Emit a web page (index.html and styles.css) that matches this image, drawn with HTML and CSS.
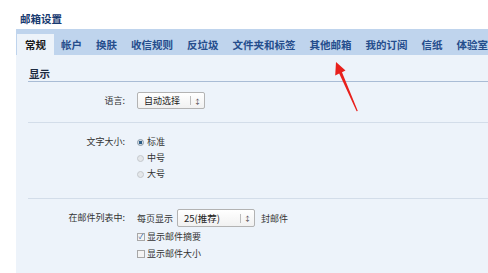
FILE: index.html
```html
<!DOCTYPE html>
<html lang="zh">
<head>
<meta charset="utf-8">
<link rel="stylesheet" href="styles.css">
</head>
<body>
<div class="page">
  <div class="title">邮箱设置</div>
  <div class="tabs">
    <div class="tab active">常规</div>
    <div class="tab">帐户</div>
    <div class="tab">换肤</div>
    <div class="tab">收信规则</div>
    <div class="tab">反垃圾</div>
    <div class="tab">文件夹和标签</div>
    <div class="tab">其他邮箱</div>
    <div class="tab">我的订阅</div>
    <div class="tab">信纸</div>
    <div class="tab">体验室</div>
  </div>
  <div class="panel">
    <div class="heading">显示</div>
    <div class="row row-lang">
      <div class="label">语言:</div>
      <div class="content">
        <div class="select sel-lang"><span class="sel-text">自动选择</span><span class="sel-bar"></span><span class="sel-arrow">&#8597;</span></div>
      </div>
    </div>
    <div class="row row-size">
      <div class="label">文字大小:</div>
      <div class="content">
        <div class="opt"><span class="radio checked"></span>标准</div>
        <div class="opt"><span class="radio"></span>中号</div>
        <div class="opt"><span class="radio"></span>大号</div>
      </div>
    </div>
    <div class="row row-list">
      <div class="label label-list">在邮件列表中:</div>
      <div class="content">
        <div class="perpage">每页显示 <div class="select sel-num"><span class="sel-text">25(推荐)</span><span class="sel-bar"></span><span class="sel-arrow">&#8597;</span></div> 封邮件</div>
        <div class="opt"><span class="check checked">&#10003;</span>显示邮件摘要</div>
        <div class="opt"><span class="check"></span>显示邮件大小</div>
      </div>
    </div>
  </div>
  <svg class="arrow" width="32" height="58" viewBox="330 58 32 58">
    <polygon points="336,62 345.5,70.5 342,72.3 357.8,111 356.6,111.3 339.2,73.6 335.2,75.5" fill="#e8201c"/>
  </svg>
</div>
</body>
</html>
```

FILE: styles.css
```css
html, body {
  margin: 0;
  padding: 0;
  background: #ffffff;
  font-family: "Noto Sans CJK SC", "Noto Sans", sans-serif;
  color: #333333;
}

.page {
  position: relative;
  padding-left: 16px;
  height: 273px;
  overflow: hidden;
}

.title {
  height: 29px;
  box-sizing: border-box;
  padding: 13px 0 0 4px;
  font-size: 10.5px;
  line-height: 12px;
  font-weight: bold;
  color: #173a70;
}

.tabs {
  display: flex;
  align-items: flex-end;
  height: 26px;
  padding-left: 1px;
  background: #bfd4ed;
  white-space: nowrap;
}

.tab {
  height: 21px;
  line-height: 21px;
  padding: 0 7px 0 7px;
  font-size: 10.5px;
  font-weight: bold;
  color: #254d8c;
  flex: none;
}

.tab.active {
  background: #edf3fa;
  color: #1a1a1a;
  padding: 0 8px;
}

.panel {
  background: #edf3fa;
  padding-left: 12px;
  height: 218px;
}

.heading {
  height: 27px;
  box-sizing: border-box;
  padding: 13px 0 0 1px;
  font-size: 10.5px;
  line-height: 12px;
  font-weight: bold;
  color: #1c2a40;
  border-bottom: 1px solid #a9bcd5;
}

.row {
  display: grid;
  grid-template-columns: 97px 1fr;
  column-gap: 12px;
  font-size: 9px;
  border-bottom: 1px solid #d3dde9;
}

.row:last-child {
  border-bottom: none;
}

.label {
  text-align: right;
  color: #333;
}

.row-lang {
  padding: 10px 0 13px;
}

.row-lang .label {
  line-height: 17px;
}

.row-size {
  padding: 11px 0 16px;
}

.row-size .label,
.opt {
  line-height: 16px;
}

.row-list {
  padding: 10px 0 0;
}

.label-list {
  line-height: 18px;
}

.opt {
  display: flex;
  align-items: center;
  color: #333;
}

.select {
  display: inline-flex;
  align-items: center;
  box-sizing: border-box;
  height: 17px;
  border: 1px solid #b3b3b3;
  border-radius: 2px;
  background: linear-gradient(#ffffff, #f1f1f1);
  vertical-align: middle;
  color: #222;
}

.sel-lang {
  width: 68px;
}

.sel-num {
  width: 78px;
  height: 18px;
  margin: 0 2px;
  font-size: 9.5px;
}

.sel-text {
  flex: 1;
  padding-left: 6px;
}

.sel-bar {
  width: 1px;
  height: 9px;
  background: #bcbcbc;
}

.sel-arrow {
  width: 13px;
  text-align: center;
  font-size: 7px;
  color: #444;
}

.perpage {
  display: flex;
  align-items: center;
  height: 18px;
  gap: 4px;
  color: #333;
}

.perpage .select {
  margin: 0 2px 0 0;
}

.row-list .opt {
  line-height: 17px;
}

.row-list .perpage + .opt {
  margin-top: 1px;
}

.radio {
  display: inline-block;
  box-sizing: border-box;
  width: 7px;
  height: 7px;
  border-radius: 50%;
  border: 1px solid #c4c8cc;
  background: #e4e7ea;
  margin: 0 3px 0 0;
}

.radio.checked {
  border: 1px solid #8b9aa8;
  background: radial-gradient(circle, #2c5d86 0 1.6px, #d8dee4 2px);
}

.check {
  display: inline-flex;
  align-items: center;
  justify-content: center;
  box-sizing: border-box;
  width: 8px;
  height: 8px;
  border: 1px solid #a7a7a7;
  background: #f4f4f4;
  margin-right: 2px;
  font-size: 7px;
  line-height: 1;
  color: #2a5aa0;
}

.arrow {
  position: absolute;
  left: 330px;
  top: 58px;
}
```
